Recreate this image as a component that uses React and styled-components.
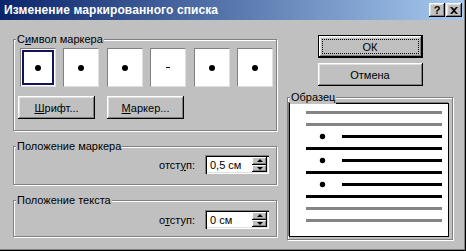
import React from 'react';
import styled, { createGlobalStyle } from 'styled-components';

const Global = createGlobalStyle`
  html, body { margin: 0; padding: 0; background: #c0c0c0; }
  body {
    font-family: "Liberation Sans", Arial, sans-serif;
    font-size: 11px;
    color: #000;
  }
`;

const Window = styled.div`
  width: 466px;
  height: 251px;
  box-sizing: border-box;
  padding: 0 2px 2px 0;
  background: #c0c0c0;
  box-shadow: inset -1px -1px 0 #000, inset -2px -2px 0 #808080;
  display: flex;
  flex-direction: column;
  overflow: hidden;
`;

const TitleBar = styled.div`
  height: 20px;
  flex: none;
  display: flex;
  align-items: center;
  padding: 0 2px 0 4px;
  background: linear-gradient(to right, #0a246a, #a6caf0);
  color: #fff;
  font-weight: bold;
  font-size: 12px;
`;

const Title = styled.div`
  flex: 1;
  white-space: nowrap;
  letter-spacing: 0.1px;
`;

const CaptionButtons = styled.div`
  display: flex;
  gap: 1px;
`;

const CaptionButton = styled.div`
  width: 16px;
  height: 14px;
  box-sizing: border-box;
  background: #c0c0c0;
  box-shadow: inset -1px -1px 0 #000, inset 1px 1px 0 #fff,
    inset -2px -2px 0 #808080, inset 2px 2px 0 #dfdfdf;
  display: flex;
  align-items: center;
  justify-content: center;
  color: #000;
  font-size: 11px;
  font-weight: bold;
  line-height: 1;
`;

const Body = styled.div`
  flex: 1;
  display: flex;
  padding: 15px 0 0 13px;
  gap: 10px;
`;

const LeftColumn = styled.div`
  width: 264px;
  display: flex;
  flex-direction: column;
  gap: 15px;
  padding-top: 4px;
`;

const RightColumn = styled.div`
  width: 166px;
  display: flex;
  flex-direction: column;
  align-items: center;
`;

const Group = styled.div`
  position: relative;
  box-sizing: border-box;
  width: ${p => p.$w || '100%'};
  height: ${p => p.$h}px;
  border: 1px solid #808080;
  box-shadow: inset 1px 1px 0 #fff, 1px 1px 0 #fff;
  padding: ${p => p.$pad};
  margin-top: ${p => p.$mt || 0}px;
`;

const Legend = styled.div`
  position: absolute;
  top: -7px;
  left: 2px;
  padding: 0 1px;
  background: #c0c0c0;
  line-height: 13px;
  white-space: nowrap;
`;

const Key = styled.span`
  text-decoration: underline;
  text-underline-offset: 1px;
`;

const MarkerRow = styled.div`
  display: flex;
  justify-content: space-between;
  width: 253px;
  margin-left: 2px;
`;

const MarkerBox = styled.div`
  width: 36px;
  height: 39px;
  box-sizing: border-box;
  background: #fff;
  border-top: 1px solid #808080;
  border-left: 1px solid #808080;
  border-right: 1px solid #dfdfdf;
  border-bottom: 1px solid #dfdfdf;
  box-shadow: ${p => (p.$selected ? 'inset 0 0 0 1px #fff, inset 0 0 0 3px #12125a' : 'none')};
  display: flex;
  align-items: center;
  justify-content: center;
`;

const Dot = styled.span`
  width: 6px;
  height: 6px;
  border-radius: 50%;
  background: #000;
`;

const Dash = styled.span`
  width: 4px;
  height: 1px;
  background: #000;
`;

const ButtonRow = styled.div`
  display: flex;
  gap: 12px;
  margin-top: 9px;
`;

const Button = styled.div`
  position: relative;
  width: ${p => p.$w}px;
  height: 23px;
  box-sizing: border-box;
  background: #c0c0c0;
  box-shadow: ${p =>
    p.$default
      ? 'inset 0 0 0 1px #000, inset -2px -2px 0 #000, inset 2px 2px 0 #fff, inset -3px -3px 0 #808080, inset 3px 3px 0 #dfdfdf'
      : 'inset -1px -1px 0 #000, inset 1px 1px 0 #fff, inset -2px -2px 0 #808080, inset 2px 2px 0 #dfdfdf'};
  display: flex;
  align-items: center;
  justify-content: center;
  white-space: nowrap;
  margin-top: ${p => p.$mt || 0}px;
`;

const FocusRect = styled.span`
  position: absolute;
  inset: 4px;
  border: 1px dotted #000;
`;

const FieldRow = styled.div`
  display: flex;
  justify-content: flex-end;
  align-items: center;
  gap: 10px;
  padding: ${p => p.$top}px 7px 0 0;
`;

const Spin = styled.div`
  width: 64px;
  height: 19px;
  box-sizing: border-box;
  background: #fff;
  box-shadow: inset 1px 1px 0 #808080, inset 2px 2px 0 #000,
    inset -1px -1px 0 #fff, inset -2px -2px 0 #dfdfdf;
  display: flex;
  align-items: center;
  padding: 2px 2px 2px 5px;
`;

const SpinText = styled.span`
  flex: 1;
`;

const SpinButtons = styled.div`
  width: 15px;
  height: 100%;
  display: flex;
  flex-direction: column;
`;

const SpinButton = styled.div`
  flex: 1;
  background: #c0c0c0;
  box-shadow: inset -1px -1px 0 #000, inset 1px 1px 0 #fff, inset -2px -2px 0 #808080;
  display: flex;
  align-items: center;
  justify-content: center;
  &::after {
    content: '';
    border-left: 3px solid transparent;
    border-right: 3px solid transparent;
    ${p => (p.$up ? 'border-bottom: 3px solid #000;' : 'border-top: 3px solid #000;')}
  }
`;

const Preview = styled.div`
  width: 160px;
  height: 134px;
  box-sizing: border-box;
  background: #fff;
  border: 1px solid #000;
  box-shadow: -1px -1px 0 #808080;
`;

function Spinner({ value }) {
  return (
    <Spin>
      <SpinText>{value}</SpinText>
      <SpinButtons>
        <SpinButton $up />
        <SpinButton />
      </SpinButtons>
    </Spin>
  );
}

function PreviewDrawing() {
  const ys = [8, 20, 32, 44, 56, 68, 80, 92, 104, 116];
  const gray = [0, 1, 8, 9];
  const bullets = [2, 4, 6];
  return (
    <svg width="158" height="132" viewBox="0 0 158 132" style={{ display: 'block' }}>
      {ys.map((y, i) => {
        if (bullets.includes(i)) {
          return (
            <g key={i}>
              <circle cx="32.5" cy={y + 0.5} r="2.7" fill="#000" />
              <rect x="52" y={y - 1} width="100" height="3" fill="#000" />
            </g>
          );
        }
        return (
          <rect key={i} x="16" y={y - 1} width="136" height="3" fill={gray.includes(i) ? '#848484' : '#000'} />
        );
      })}
    </svg>
  );
}

export default function App() {
  return (
    <>
      <Global />
      <Window>
        <TitleBar>
          <Title>Изменение маркированного списка</Title>
          <CaptionButtons>
            <CaptionButton>?</CaptionButton>
            <CaptionButton>
              <svg width="8" height="7" viewBox="0 0 8 7">
                <path d="M0 0h2l2 2 2-2h2L5 3.5 8 7H6L4 5 2 7H0l3-3.5z" fill="#000" />
              </svg>
            </CaptionButton>
          </CaptionButtons>
        </TitleBar>
        <Body>
          <LeftColumn>
            <Group $h={92} $pad="8px 0 0 4px">
              <Legend>
                С<Key>и</Key>мвол маркера
              </Legend>
              <MarkerRow>
                <MarkerBox $selected><Dot /></MarkerBox>
                <MarkerBox><Dot /></MarkerBox>
                <MarkerBox><Dot /></MarkerBox>
                <MarkerBox><Dash /></MarkerBox>
                <MarkerBox><Dot /></MarkerBox>
                <MarkerBox><Dot /></MarkerBox>
              </MarkerRow>
              <ButtonRow>
                <Button $w={77}><span><Key>Ш</Key>рифт...</span></Button>
                <Button $w={77}><span><Key>М</Key>аркер...</span></Button>
              </ButtonRow>
            </Group>
            <Group $h={39}>
              <Legend>Положение маркера</Legend>
              <FieldRow $top={8}>
                <span>отст<Key>у</Key>п:</span>
                <Spinner value="0,5 см" />
              </FieldRow>
            </Group>
            <Group $h={37}>
              <Legend>Положение текста</Legend>
              <FieldRow $top={9}>
                <span>о<Key>т</Key>ступ:</span>
                <Spinner value="0 см" />
              </FieldRow>
            </Group>
          </LeftColumn>
          <RightColumn>
            <Button $w={105} $default>
              <FocusRect />
              <span>ОК</span>
            </Button>
            <Button $w={105} $mt={5}>
              <span>Отмена</span>
            </Button>
            <Group $w="166px" $h={143} $pad="5px 0 0 1px" $mt={11}>
              <Legend>Образец</Legend>
              <Preview>
                <PreviewDrawing />
              </Preview>
            </Group>
          </RightColumn>
        </Body>
      </Window>
    </>
  );
}
